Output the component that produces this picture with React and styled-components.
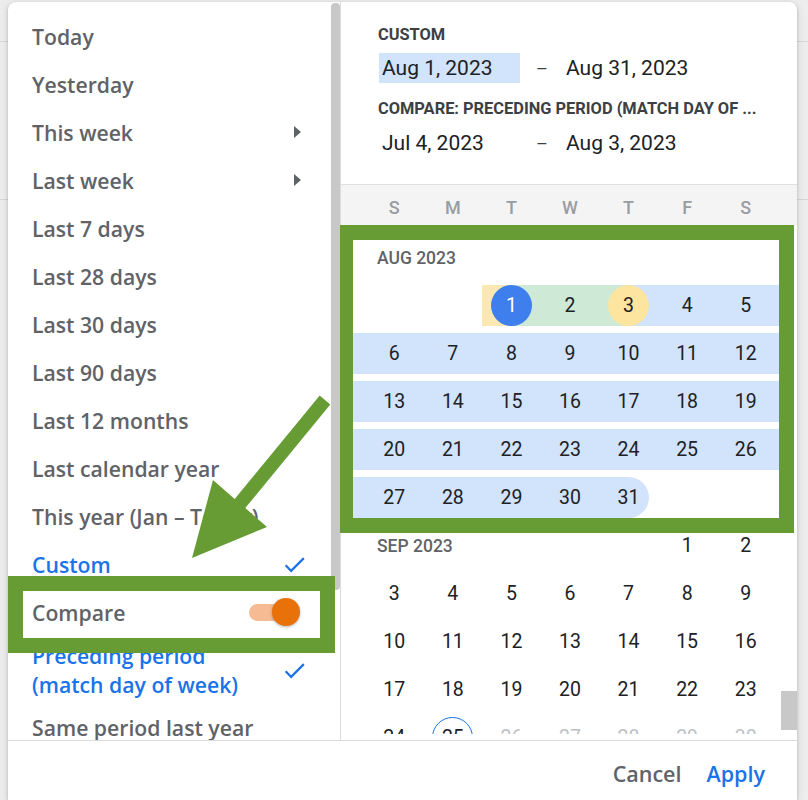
import React from "react";
import styled, { createGlobalStyle } from "styled-components";

const BLUE = "#1a73e8";
const RANGE = "#d2e3fc";
const COMPARE = "#fce8b2";
const OVERLAP = "#ceead6";
const MARK = "#679c35";

const GlobalStyle = createGlobalStyle`
  html, body {
    margin: 0;
    padding: 0;
    background: #ededed;
    overflow: hidden;
  }
  * {
    box-sizing: border-box;
  }
`;

const Page = styled.div`
  position: relative;
  width: 808px;
  height: 800px;
  overflow: hidden;
  padding: 2px 11px 0 8px;
  background-color: #ededed;
  background-image: linear-gradient(#d6d6d6, #d6d6d6),
    linear-gradient(#d6d6d6, #d6d6d6);
  background-size: 100% 1px, 100% 1px;
  background-position: 0 41px, 0 199px;
  background-repeat: no-repeat;
`;

const Card = styled.div`
  display: flex;
  flex-direction: column;
  height: 798px;
  background: #fff;
  border-radius: 8px 8px 0 0;
  box-shadow: 0 1px 3px rgba(0, 0, 0, 0.18), 0 2px 8px rgba(0, 0, 0, 0.12);
  overflow: hidden;
`;

const Body = styled.div`
  display: flex;
  height: 738px;
`;

/* ---------- presets column ---------- */

const Presets = styled.div`
  display: flex;
  width: 332px;
  flex-shrink: 0;
`;

const PresetList = styled.ul`
  flex: 1;
  margin: 0;
  padding: 10px 0 0;
  list-style: none;
  overflow: hidden;
`;

const PresetItem = styled.li`
  display: flex;
  align-items: center;
  justify-content: space-between;
  min-height: 48px;
  padding: ${({ $tall }) => ($tall ? "5px" : "0")} 27px
    ${({ $tall }) => ($tall ? "4px" : "0")} 24px;
  font-family: "Open Sans", "Liberation Sans", sans-serif;
  font-weight: 600;
  font-size: 21.2px;
  line-height: 29px;
  color: ${({ $active }) => ($active ? BLUE : "#5f6368")};
  white-space: nowrap;
`;

const Caret = styled.span`
  width: 0;
  height: 0;
  margin-right: 3px;
  border-left: 7px solid #5f6368;
  border-top: 6px solid transparent;
  border-bottom: 6px solid transparent;
`;

const CheckIcon = () => (
  <svg width="27" height="27" viewBox="0 0 24 24" style={{ marginRight: -4 }}>
    <path fill={BLUE} d="M9 16.17 4.83 12l-1.42 1.41L9 19 21 7l-1.41-1.41z" />
  </svg>
);

const SwitchTrack = styled.span`
  display: inline-flex;
  align-items: center;
  justify-content: flex-end;
  width: 42px;
  height: 17px;
  margin-right: 13px;
  border-radius: 9px;
  background: #f6bb93;
`;

const SwitchThumb = styled.span`
  width: 28px;
  height: 28px;
  margin-right: -9px;
  border-radius: 50%;
  background: #e8710a;
  box-shadow: 0 1px 3px rgba(0, 0, 0, 0.3);
`;

const ScrollTrack = styled.div`
  display: flex;
  flex-direction: column;
  width: ${({ $w }) => $w}px;
  flex-shrink: 0;
`;

const ScrollThumb = styled.div`
  height: ${({ $h }) => $h}px;
  margin-top: ${({ $top }) => $top}px;
  border-radius: ${({ $round }) => ($round ? "4px" : "0")};
  background: #c8c8c8;
`;

/* ---------- range column ---------- */

const RangePanel = styled.div`
  display: flex;
  flex-direction: column;
  flex: 1;
  min-width: 0;
  border-left: 1px solid #dadce0;
`;

const RangeHeader = styled.div`
  height: 183px;
  flex-shrink: 0;
  padding: 24px 0 0 37px;
  border-bottom: 1px solid #e0e0e0;
`;

const FieldLabel = styled.div`
  margin-top: ${({ $gap }) => $gap || 0}px;
  font-family: Roboto, "Liberation Sans", sans-serif;
  font-weight: 700;
  font-size: 16.4px;
  line-height: 18px;
  color: #3c4043;
  text-transform: uppercase;
  white-space: nowrap;
`;

const DateRow = styled.div`
  display: flex;
  align-items: center;
  height: 30px;
  margin-top: ${({ $gap }) => $gap}px;
  margin-left: 1px;
  font-family: Roboto, "Liberation Sans", sans-serif;
  font-size: 21px;
  color: #202124;
`;

const DateField = styled.span`
  display: flex;
  align-items: center;
  width: 141px;
  height: 30px;
  padding-left: 3px;
  background: ${({ $selected }) => ($selected ? RANGE : "transparent")};
`;

const Dash = styled.span`
  width: 43px;
  padding-left: 16px;
  font-size: 18px;
  color: #3c4043;
`;

const WeekdayBar = styled.div`
  display: grid;
  grid-template-columns: repeat(7, 1fr);
  align-items: center;
  height: 40px;
  flex-shrink: 0;
  padding: 5px 22px 0 24px;
  background: #f4f4f4;
  font-family: Roboto, "Liberation Sans", sans-serif;
  font-weight: 500;
  font-size: 18px;
  color: #999da1;
  text-align: center;
`;

const CalendarScroll = styled.div`
  display: flex;
  height: 509px;
  flex-shrink: 0;
  overflow: hidden;
`;

const Months = styled.div`
  flex: 1;
  min-width: 0;
`;

const MonthTitle = styled.div`
  height: 60px;
  padding: 24px 0 0 36px;
  font-family: Roboto, "Liberation Sans", sans-serif;
  font-weight: 500;
  font-size: 17.5px;
  line-height: 18px;
  color: #5f6368;
`;

const InlineTitle = styled(MonthTitle)`
  grid-column: span ${({ $span }) => $span};
  height: auto;
  padding: 0 0 0 12px;
  align-self: center;
`;

const Week = styled.div`
  display: grid;
  grid-template-columns: 24px repeat(7, 1fr) 6px;
  height: 41px;
  margin-bottom: 7px;
`;

const Edge = styled.div`
  background: ${({ $fill }) => $fill || "transparent"};
`;

const DayCell = styled.div`
  display: flex;
  align-items: center;
  justify-content: center;
  background: linear-gradient(
    to right,
    ${({ $left }) => $left || "transparent"} 50%,
    ${({ $right }) => $right || "transparent"} 50%
  );
`;

const DayNum = styled.span`
  display: flex;
  align-items: center;
  justify-content: center;
  width: 41px;
  height: 41px;
  border-radius: 50%;
  background: ${({ $dot }) => $dot || "transparent"};
  border: ${({ $today }) => ($today ? `1px solid ${BLUE}` : "none")};
  font-family: Roboto, "Liberation Sans", sans-serif;
  font-size: 19.5px;
  color: ${({ $tone }) => $tone || "#202124"};
`;

const Footer = styled.div`
  display: flex;
  align-items: center;
  justify-content: flex-end;
  gap: 25px;
  height: 60px;
  padding: 6px 32px 0 0;
  border-top: 1px solid #dadce0;
`;

const TextButton = styled.button`
  padding: 0;
  border: 0;
  background: none;
  font-family: "Open Sans", "Liberation Sans", sans-serif;
  font-weight: 600;
  font-size: 21.5px;
  color: ${({ $primary }) => ($primary ? BLUE : "#5f6368")};
  cursor: pointer;
`;

const Annotations = styled.svg`
  position: absolute;
  left: 0;
  top: 0;
  width: 808px;
  height: 800px;
  pointer-events: none;
`;

/* ---------- data ---------- */

const presets = [
  { label: "Today" },
  { label: "Yesterday" },
  { label: "This week", more: true },
  { label: "Last week", more: true },
  { label: "Last 7 days" },
  { label: "Last 28 days" },
  { label: "Last 30 days" },
  { label: "Last 90 days" },
  { label: "Last 12 months" },
  { label: "Last calendar year" },
  { label: "This year (Jan – Today)" },
  { label: "Custom", active: true },
  { label: "Compare", toggle: true },
  { label: ["Preceding period", "(match day of week)"], active: true },
  { label: "Same period last year" },
];

// d = day, l/r = band halves, dot = circle fill
const aug = [
  {
    edges: [null, RANGE],
    days: [
      null,
      null,
      { d: 1, l: COMPARE, r: OVERLAP, dot: "#3f7fed", tone: "#fff" },
      { d: 2, l: OVERLAP, r: OVERLAP },
      { d: 3, l: OVERLAP, r: RANGE, dot: "#fde49f" },
      { d: 4, l: RANGE, r: RANGE },
      { d: 5, l: RANGE, r: RANGE },
    ],
  },
  ...[6, 13, 20].map((start) => ({
    edges: [RANGE, RANGE],
    days: Array.from({ length: 7 }, (_, i) => ({ d: start + i, l: RANGE, r: RANGE })),
  })),
  {
    edges: [RANGE, null],
    days: [
      { d: 27, l: RANGE, r: RANGE },
      { d: 28, l: RANGE, r: RANGE },
      { d: 29, l: RANGE, r: RANGE },
      { d: 30, l: RANGE, r: RANGE },
      { d: 31, l: RANGE, dot: RANGE },
      null,
      null,
    ],
  },
];

const sep = [3, 10, 17, 24].map((start) => ({
  edges: [null, null],
  days: Array.from({ length: 7 }, (_, i) => {
    const d = start + i;
    return { d, today: d === 25, tone: d > 25 ? "#bdc1c6" : undefined };
  }),
}));

const WeekRow = ({ week, title, offset }) => (
  <Week>
    <Edge $fill={week.edges[0]} />
    {title && <InlineTitle $span={offset}>{title}</InlineTitle>}
    {week.days.map((day, i) =>
      day ? (
        <DayCell key={i} $left={day.l} $right={day.r}>
          <DayNum $dot={day.dot} $tone={day.tone} $today={day.today}>
            {day.d}
          </DayNum>
        </DayCell>
      ) : (
        <DayCell key={i} />
      )
    )}
    <Edge $fill={week.edges[1]} />
  </Week>
);

export default function App() {
  return (
    <Page>
      <GlobalStyle />
      <Card>
        <Body>
          <Presets>
            <PresetList>
              {presets.map((p, i) => (
                <PresetItem key={i} $active={p.active} $tall={Array.isArray(p.label)}>
                  <span>
                    {Array.isArray(p.label)
                      ? p.label.map((line) => <div key={line}>{line}</div>)
                      : p.label}
                  </span>
                  {p.more && <Caret />}
                  {p.active && <CheckIcon />}
                  {p.toggle && (
                    <SwitchTrack>
                      <SwitchThumb />
                    </SwitchTrack>
                  )}
                </PresetItem>
              ))}
            </PresetList>
            <ScrollTrack $w={9}>
              <ScrollThumb $top={1} $h={587} $round />
            </ScrollTrack>
          </Presets>

          <RangePanel>
            <RangeHeader>
              <FieldLabel>Custom</FieldLabel>
              <DateRow $gap={9}>
                <DateField $selected>Aug 1, 2023</DateField>
                <Dash>–</Dash>
                <DateField>Aug 31, 2023</DateField>
              </DateRow>
              <FieldLabel $gap={17}>Compare: Preceding period (match day of ...</FieldLabel>
              <DateRow $gap={10}>
                <DateField>Jul 4, 2023</DateField>
                <Dash>–</Dash>
                <DateField>Aug 3, 2023</DateField>
              </DateRow>
            </RangeHeader>

            <WeekdayBar>
              {["S", "M", "T", "W", "T", "F", "S"].map((d, i) => (
                <span key={i}>{d}</span>
              ))}
            </WeekdayBar>

            <CalendarScroll>
              <Months>
                <MonthTitle>AUG 2023</MonthTitle>
                {aug.map((w, i) => (
                  <WeekRow key={i} week={w} />
                ))}
                <WeekRow
                  title="SEP 2023"
                  offset={5}
                  week={{ edges: [null, null], days: [{ d: 1 }, { d: 2 }] }}
                />
                {sep.map((w, i) => (
                  <WeekRow key={i} week={w} />
                ))}
              </Months>
              <ScrollTrack $w={16}>
                <ScrollThumb $top={466} $h={39} />
              </ScrollTrack>
            </CalendarScroll>
          </RangePanel>
        </Body>

        <Footer>
          <TextButton>Cancel</TextButton>
          <TextButton $primary>Apply</TextButton>
        </Footer>
      </Card>

      <Annotations viewBox="0 0 808 800">
        <path
          fill={MARK}
          fillRule="evenodd"
          d="M340 225H794V533H340Z M353 240V518H779V240Z"
        />
        <path
          fill={MARK}
          fillRule="evenodd"
          d="M8 576H335V653H8Z M23 591V638H320V591Z"
        />
        <polygon
          fill={MARK}
          points="319.7,395.4 330.3,404.6 245.3,508.1 267,527 192,558 213,480 234.7,498.9"
        />
      </Annotations>
    </Page>
  );
}
